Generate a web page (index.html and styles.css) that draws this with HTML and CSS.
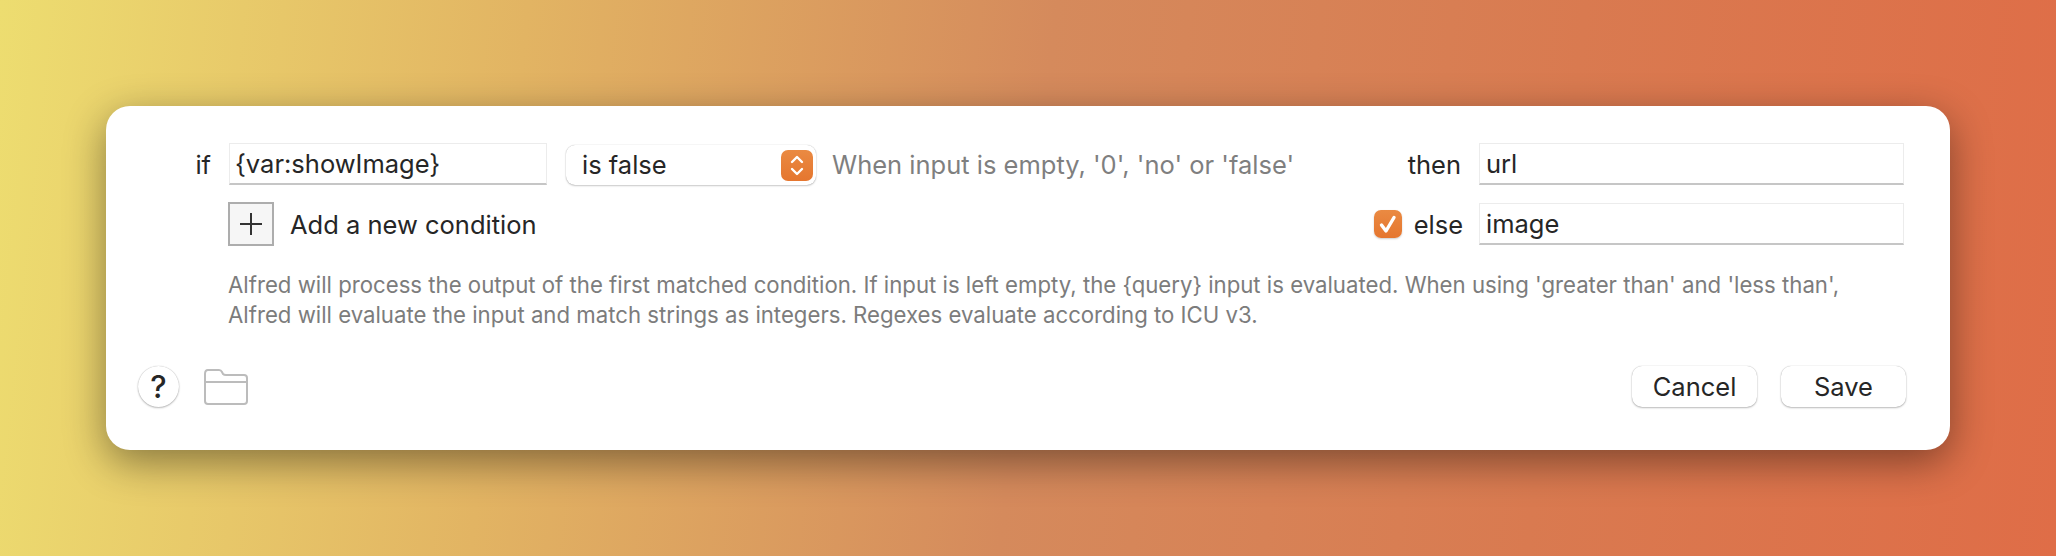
FILE: index.html
```html
<!DOCTYPE html>
<html lang="en">
<head>
<meta charset="utf-8">
<title>Conditional</title>
<link rel="stylesheet" href="styles.css">
</head>
<body>
<main class="card">
  <div class="row row-first">
    <span class="label label-if">if</span>
    <div class="field field-input">{var:showImage}</div>
    <div class="select">
      <span class="select-value">is false</span>
      <span class="stepper">
        <svg width="32" height="31" viewBox="0 0 32 31" fill="none" stroke="#fff" stroke-width="2.4" stroke-linecap="round" stroke-linejoin="round"><path d="M11 12 16 7 21 12"/><path d="M11 19 16 24 21 19"/></svg>
      </span>
    </div>
    <span class="hint">When input is empty, '0', 'no' or 'false'</span>
    <span class="label label-then">then</span>
    <div class="field field-output">url</div>
  </div>
  <div class="row row-second">
    <span class="add-btn">
      <svg width="22" height="22" viewBox="0 0 22 22" stroke="#333" stroke-width="2" fill="none"><path d="M11 0V22M0 11H22"/></svg>
    </span>
    <span class="add-text">Add a new condition</span>
    <span class="checkbox">
      <svg width="28" height="28" viewBox="0 0 28 28" fill="none" stroke="#fff" stroke-width="3.4" stroke-linecap="round" stroke-linejoin="round"><path d="M7.5 15 12 21 20 7.5"/></svg>
    </span>
    <span class="label label-else">else</span>
    <div class="field field-output">image</div>
  </div>
  <p class="help">Alfred will process the output of the first matched condition. If input is left empty, the {query} input is evaluated. When using 'greater than' and 'less than',<br>Alfred will evaluate the input and match strings as integers. Regexes evaluate according to ICU v3.</p>
  <div class="footer">
    <span class="help-btn">?</span>
    <svg class="folder" width="44" height="36" viewBox="0 0 44 36" fill="none" stroke="#bcbcbc" stroke-width="2" stroke-linejoin="round"><path d="M1 5Q1 1 4 1H15Q17 1 18 3L19 5Q20 6 22 6H40Q43 6 43 9V32Q43 35 40 35H4Q1 35 1 32Z"/><path d="M2 13H42"/></svg>
    <span class="spacer"></span>
    <span class="btn">Cancel</span>
    <span class="btn">Save</span>
  </div>
</main>
</body>
</html>
```
FILE: styles.css
```css
html, body {
  margin: 0;
  height: 556px;
  overflow: hidden;
}
body {
  box-sizing: border-box;
  padding: 106px;
  background: linear-gradient(96deg, #eddd70 0%, #e2b463 25%, #d58a5c 50%, #d97a50 75%, #df6d47 100%);
  font-family: "Inter", "Liberation Sans", sans-serif;
  color: #262626;
}
.card {
  box-sizing: border-box;
  height: 344px;
  padding: 37px 46px 0 32px;
  background: #fff;
  border-radius: 24px;
  box-shadow: 0 12px 40px rgba(0, 0, 0, 0.42);
  display: flex;
  flex-direction: column;
}
.row {
  display: flex;
  align-items: center;
}
.row-first {
  height: 42px;
}
.row-second {
  height: 44px;
  margin-top: 17px;
  padding-left: 90px;
}
.label {
  font-size: 25.5px;
  white-space: nowrap;
}
.label-if {
  width: 91px;
  padding-right: 18px;
  box-sizing: border-box;
  text-align: right;
}
.field {
  box-sizing: border-box;
  height: 42px;
  padding: 0 5px;
  line-height: 40px;
  font-size: 25.5px;
  background: #fff;
  border: 1px solid #ececec;
  border-bottom: 2px solid #c6c6c6;
}
.field-input {
  width: 318px;
}
.field-output {
  width: 425px;
  margin-left: 18px;
  padding-left: 6px;
}
.row-second .field-output {
  margin-left: 16px;
}
.select {
  box-sizing: border-box;
  width: 250px;
  height: 40px;
  margin: 2px 0 0 19px;
  padding: 0 3px 0 16px;
  display: flex;
  align-items: center;
  justify-content: space-between;
  font-size: 25.5px;
  background: #fff;
  border-radius: 9px;
  box-shadow: 0 0 1px rgba(0, 0, 0, 0.3), 0 1px 2px rgba(0, 0, 0, 0.2);
}
.select-value {
  margin-top: -2px;
}
.stepper {
  width: 32px;
  height: 31px;
  display: block;
  border-radius: 7px;
  background: linear-gradient(#ea8a42, #e5762f);
}
.stepper svg, .checkbox svg, .add-btn svg {
  display: block;
}
.hint {
  margin-left: 16px;
  font-size: 25.5px;
  color: #7f7f7f;
  white-space: nowrap;
}
.label-then {
  margin-left: auto;
}
.add-btn {
  box-sizing: border-box;
  width: 46px;
  height: 44px;
  display: flex;
  align-items: center;
  justify-content: center;
  background: #f6f6f6;
  border: 2px solid #adadad;
}
.add-text {
  margin-left: 16px;
  font-size: 25.5px;
}
.checkbox {
  width: 28px;
  height: 28px;
  margin-left: auto;
  border-radius: 7px;
  background: linear-gradient(#ea8a42, #e5762f);
  box-shadow: 0 1px 2px rgba(0, 0, 0, 0.2);
}
.label-else {
  margin-left: 12px;
}
.help {
  margin: 24px 0 0 90px;
  font-size: 22.2px;
  line-height: 30px;
  color: #7c7c7c;
  white-space: nowrap;
}
.footer {
  margin: 36px -2px 0 0;
  display: flex;
  align-items: center;
}
.help-btn {
  width: 41px;
  height: 41px;
  display: flex;
  align-items: center;
  justify-content: center;
  border-radius: 50%;
  font-size: 31px;
  font-weight: 450;
  background: #fff;
  box-shadow: 0 0 1px rgba(0, 0, 0, 0.3), 0 1px 2px rgba(0, 0, 0, 0.25);
}
.folder {
  margin-left: 25px;
}
.spacer {
  flex: 1;
}
.btn {
  box-sizing: border-box;
  width: 125px;
  height: 41px;
  margin-left: 24px;
  display: flex;
  align-items: center;
  justify-content: center;
  font-size: 25.5px;
  border-radius: 10px;
  background: #fff;
  box-shadow: 0 0 1px rgba(0, 0, 0, 0.3), 0 1px 2px rgba(0, 0, 0, 0.25);
}
```
